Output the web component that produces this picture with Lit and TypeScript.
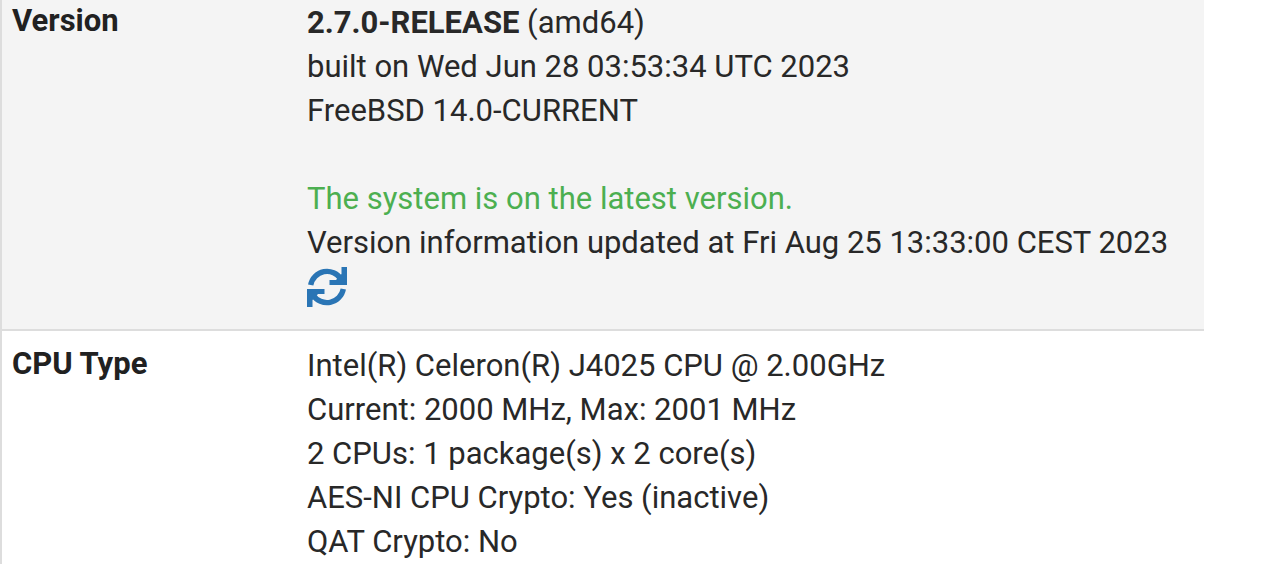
import { LitElement, html, css } from "lit";
import { customElement } from "lit/decorators.js";

@customElement("app-root")
class AppRoot extends LitElement {
  static styles = css`
    :host {
      display: block;
      background: #fff;
      font-family: Roboto, sans-serif;
      font-size: 31px;
      line-height: 44px;
      color: #282828;
    }
    .info {
      width: 95%;
      border-collapse: collapse;
      border-left: 2px solid #ddd;
    }
    .row {
      vertical-align: top;
    }
    .row + .row {
      border-top: 2px solid #ddd;
    }
    .striped {
      background: #f4f4f4;
    }
    .label {
      width: 285px;
      padding: 0 0 0 10px;
      text-align: left;
      font-weight: 700;
      line-height: 42px;
      color: #212121;
    }
    .value {
      padding: 1px 0 0 10px;
    }
    .striped .value {
      padding-bottom: 20px;
    }
    .row + .row .label {
      padding-top: 12px;
    }
    .row + .row .value {
      padding-top: 13px;
    }
    .line {
      display: block;
      min-height: 44px;
    }
    .success {
      color: #4caf50;
    }
    .refresh {
      display: flex;
      align-items: center;
      height: 44px;
      padding: 0;
      border: 0;
      background: none;
      color: #2a75b5;
      cursor: pointer;
    }
    .icon {
      width: 40px;
      height: 40px;
    }
    .arc {
      fill: none;
      stroke: currentColor;
      stroke-width: 5.4;
    }
    .head {
      fill: currentColor;
    }
  `;

  render() {
    return html`
      <table class="info">
        <tbody>
          <tr class="row striped">
            <th class="label" scope="row">Version</th>
            <td class="value">
              <span class="line"><strong>2.7.0-RELEASE</strong> (amd64)</span>
              <span class="line">built on Wed Jun 28 03:53:34 UTC 2023</span>
              <span class="line">FreeBSD 14.0-CURRENT</span>
              <span class="line"></span>
              <span class="line success">The system is on the latest version.</span>
              <span class="line">Version information updated at Fri Aug 25 13:33:00 CEST 2023</span>
              <button class="refresh" type="button" aria-label="Refresh">
                <svg class="icon" viewBox="0 0 40 40" aria-hidden="true">
                  <path class="arc" d="M3.700 18A16.600 16.600 0 0 1 34 12" />
                  <path class="head" d="M34.500 0H40V18H22.500V13H29L34.500 7Z" />
                  <path class="arc" d="M36.300 22A16.600 16.600 0 0 1 6 28" />
                  <path class="head" d="M5.500 40H0V22H17.500V27H11L5.500 33Z" />
                </svg>
              </button>
            </td>
          </tr>
          <tr class="row">
            <th class="label" scope="row">CPU Type</th>
            <td class="value">
              <span class="line">Intel(R) Celeron(R) J4025 CPU @ 2.00GHz</span>
              <span class="line">Current: 2000 MHz, Max: 2001 MHz</span>
              <span class="line">2 CPUs: 1 package(s) x 2 core(s)</span>
              <span class="line">AES-NI CPU Crypto: Yes (inactive)</span>
              <span class="line">QAT Crypto: No</span>
            </td>
          </tr>
        </tbody>
      </table>
    `;
  }
}
